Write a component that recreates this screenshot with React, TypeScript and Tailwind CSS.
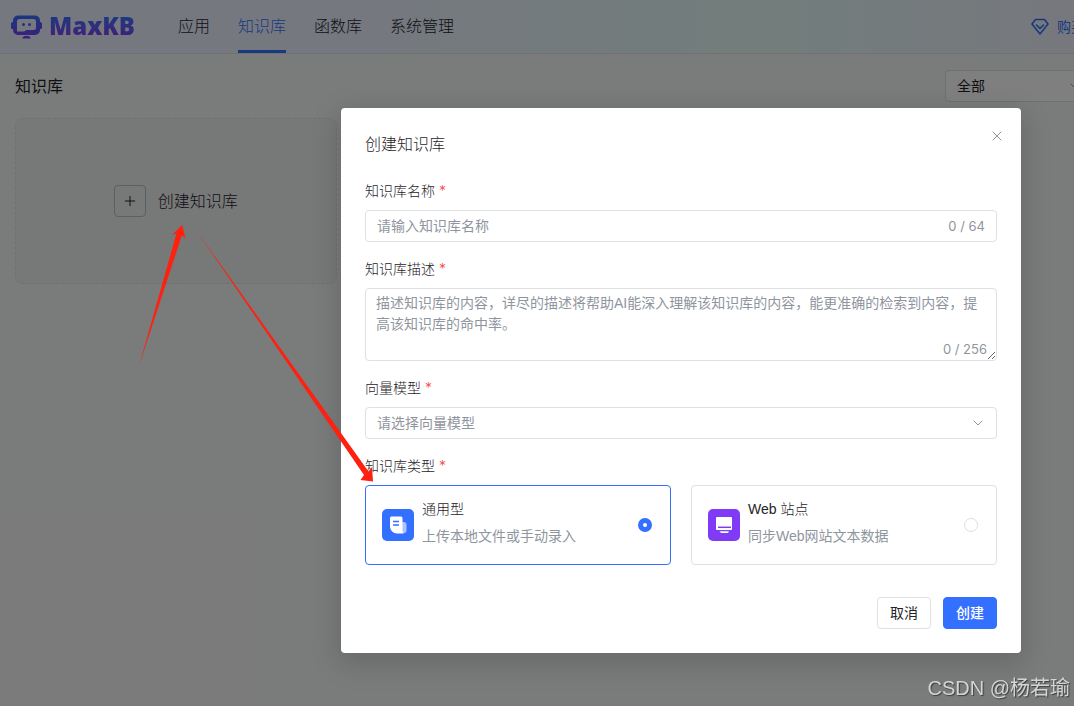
import { useState } from 'react';
import type { ReactNode } from 'react';
import { ChevronDown, Plus, X } from 'lucide-react';
import clsx from 'clsx';

const NAV = ['应用', '知识库', '函数库', '系统管理'];

const NAME_MAX = 64;
const DESC_MAX = 256;

function Logo() {
  return (
    <a href="#" className="flex w-[122px] items-center gap-[7px]">
      <svg width="31" height="24" viewBox="0 0 31 24" fill="none" className="shrink-0">
        <defs>
          <linearGradient id="logo" x1="0" y1="0" x2="0" y2="24" gradientUnits="userSpaceOnUse">
            <stop stopColor="#3370ff" />
            <stop offset="1" stopColor="#7f3bf5" />
          </linearGradient>
        </defs>
        <rect x="0" y="7" width="4" height="7" rx="1.5" fill="url(#logo)" />
        <rect x="27" y="7" width="4" height="7" rx="1.5" fill="url(#logo)" />
        <path
          fillRule="evenodd"
          fill="url(#logo)"
          d="M7 0.500h17a5 5 0 0 1 5 5v9.500a5 5 0 0 1-5 5H7a5 5 0 0 1-5-5V5.500a5 5 0 0 1 5-5zM8.500 4A2.500 2.500 0 0 0 6 6.500V16.500H13L15.500 15h7a2.500 2.500 0 0 0 2.500-2.500v-6A2.500 2.500 0 0 0 22.500 4z"
        />
        <circle cx="12.500" cy="9.500" r="1.500" fill="url(#logo)" />
        <circle cx="18.500" cy="9.500" r="1.500" fill="url(#logo)" />
        <path d="M13 21h5l2 2.500h-9z" fill="url(#logo)" />
      </svg>
      <span className="bg-linear-to-b from-[#3370ff] from-20% to-[#7f3bf5] to-80% bg-clip-text pb-0.5 font-['Open_Sans',sans-serif] text-2xl leading-8 font-extrabold text-transparent">
        MaxKB
      </span>
    </a>
  );
}

function Header() {
  return (
    <header className="flex h-[54px] items-stretch border-b border-[#dee0e3] bg-[linear-gradient(90deg,#ebf1ff_24%,#e5fbf8_56%,#f2ebfe_90%)] pr-[277px] pl-[11px]">
      <Logo />
      <nav className="ml-[45px] flex gap-7">
        {NAV.map((item) => (
          <a
            key={item}
            href="#"
            className={clsx(
              'flex items-center border-b-3 border-t-3 border-t-transparent text-base',
              item === '知识库' ? 'border-b-[#3370ff] text-[#3370ff]' : 'border-b-transparent',
            )}
          >
            {item}
          </a>
        ))}
      </nav>
      <button type="button" className="ml-auto flex items-center gap-2 text-sm font-normal text-[#3370ff]">
        <svg width="18" height="18" viewBox="0 0 18 18" fill="none" stroke="currentColor" strokeWidth="1.600" strokeLinejoin="round" strokeLinecap="round">
          <path d="M4.500 1.500h9l3.500 4.500L9 16 1 6z" />
          <path d="M5.500 7 9 10.500 12.500 7" />
        </svg>
        购买
      </button>
    </header>
  );
}

function Required() {
  return <span className="font-['Inter',sans-serif] text-[#f54a45]">*</span>;
}

function Field({ id, label, children }: { id: string; label: string; children: ReactNode }) {
  return (
    <div className="flex flex-col gap-2">
      <label htmlFor={id} className="text-sm leading-[22px]">
        {label} <Required />
      </label>
      {children}
    </div>
  );
}

type TypeCardProps = {
  title: string;
  desc: string;
  icon: ReactNode;
  checked: boolean;
  onSelect: () => void;
};

function TypeCard({ title, desc, icon, checked, onSelect }: TypeCardProps) {
  return (
    <label
      className={clsx(
        'flex h-20 flex-1 cursor-pointer items-center gap-2 rounded border pr-[18px] pl-4',
        checked ? 'border-[#3370ff]' : 'border-[#dee0e3]',
      )}
    >
      {icon}
      <span className="flex flex-1 flex-col gap-1 self-start pt-3 text-sm">
        <span className="leading-[22px]">{title}</span>
        <span className="leading-6 font-normal text-[#8f959e]">{desc}</span>
      </span>
      <input
        type="radio"
        name="type"
        checked={checked}
        onChange={onSelect}
        className="size-[14px] appearance-none rounded-full border border-[#dcdfe6] bg-white checked:border-5 checked:border-[#3370ff]"
      />
    </label>
  );
}

function DocIcon() {
  return (
    <svg width="32" height="32" viewBox="0 0 32 32">
      <rect width="32" height="32" rx="5" fill="#3370ff" />
      <path d="M19 13h3a2.500 2.500 0 0 1 2.500 2.500v6A2.500 2.500 0 0 1 22 24h-4z" fill="#a9c4ff" />
      <path d="M8 9a1.500 1.500 0 0 1 1.500-1.500H19a1.500 1.500 0 0 1 1.500 1.500v12.500A3 3 0 0 0 22 24.500h-7a7 7 0 0 1-7-7z" fill="#fff" />
      <path d="M11 12.500h6M11 16h6" stroke="#3370ff" strokeWidth="1.300" />
    </svg>
  );
}

function WebIcon() {
  return (
    <svg width="32" height="32" viewBox="0 0 32 32">
      <rect width="32" height="32" rx="5" fill="#7f3bf5" />
      <path d="M9 8h14a1 1 0 0 1 1 1v11a1 1 0 0 1-1 1H9a1 1 0 0 1-1-1V9a1 1 0 0 1 1-1z" fill="#fff" />
      <path d="M10 18.300h13" stroke="#7f3bf5" strokeWidth="1.500" />
      <path d="M11.500 22.300h9.500l-1 1.700h-7z" fill="#fff" />
    </svg>
  );
}

function CreateDialog() {
  const [name, setName] = useState('');
  const [desc, setDesc] = useState('');
  const [type, setType] = useState<'base' | 'web'>('base');

  return (
    <form
      role="dialog"
      aria-labelledby="dialog-title"
      className="relative w-[680px] rounded bg-white p-6 shadow-[0_8px_28px_4px_rgba(0,0,0,0.14)]"
    >
      <button type="button" aria-label="关闭" className="absolute top-5 right-4 text-[#8f959e]">
        <X size={16} strokeWidth={1.5} />
      </button>
      <h2 id="dialog-title" className="mb-[22px] text-base leading-[26px]">创建知识库</h2>

      <div className="flex flex-col gap-4">
        <Field id="name" label="知识库名称">
          <div className="flex h-8 items-center rounded border border-[#dee0e3] px-[11px] font-normal">
            <input
              id="name"
              value={name}
              maxLength={NAME_MAX}
              onChange={(e) => setName(e.target.value)}
              placeholder="请输入知识库名称"
              className="flex-1 text-sm outline-none placeholder:text-[#8f959e]"
            />
            <span className="font-['Inter',sans-serif] text-[13px] leading-4 text-[#8f959e]">{name.length} / {NAME_MAX}</span>
          </div>
        </Field>

        <Field id="desc" label="知识库描述">
          <div className="relative flex font-normal">
            <textarea
              id="desc"
              value={desc}
              maxLength={DESC_MAX}
              onChange={(e) => setDesc(e.target.value)}
              placeholder="描述知识库的内容，详尽的描述将帮助AI能深入理解该知识库的内容，能更准确的检索到内容，提高该知识库的命中率。"
              className="h-[73px] w-full resize-y rounded border border-[#dee0e3] px-[10px] py-1 text-sm leading-[21px] outline-none placeholder:text-[#8f959e]"
            />
            <span className="absolute right-[10px] bottom-1 font-['Inter',sans-serif] text-[13px] leading-4 text-[#8f959e]">
              {desc.length} / {DESC_MAX}
            </span>
          </div>
        </Field>

        <Field id="model" label="向量模型">
          <div className="relative flex">
            <select
              id="model"
              className="h-8 w-full appearance-none rounded border border-[#dee0e3] bg-white px-[11px] text-sm font-normal text-[#8f959e]"
            >
              <option>请选择向量模型</option>
            </select>
            <ChevronDown size={16} strokeWidth={1.5} className="pointer-events-none absolute top-2 right-[11px] text-[#8f959e]" />
          </div>
        </Field>

        <fieldset>
          <legend className="mb-2 text-sm leading-[22px]">
            知识库类型 <Required />
          </legend>
          <div className="flex gap-5">
            <TypeCard
              title="通用型"
              desc="上传本地文件或手动录入"
              icon={<DocIcon />}
              checked={type === 'base'}
              onSelect={() => setType('base')}
            />
            <TypeCard
              title="Web 站点"
              desc="同步Web网站文本数据"
              icon={<WebIcon />}
              checked={type === 'web'}
              onSelect={() => setType('web')}
            />
          </div>
        </fieldset>
      </div>

      <div className="mt-8 flex justify-end gap-3 text-sm">
        <button type="button" className="h-8 rounded border border-[#dee0e3] px-3 font-normal">取消</button>
        <button type="button" className="h-8 rounded border border-[#3370ff] bg-[#3370ff] px-3 font-medium text-white">
          创建
        </button>
      </div>
    </form>
  );
}

// Hand-drawn pointers: card -> dialog type
function Arrows() {
  return (
    <svg className="pointer-events-none absolute inset-0 h-full w-full" fill="#ff2010">
      <path d="M139 366 176.500 233.500 172 235 182 225 185.500 238 181.800 235.500z" />
      <path d="M196 230 364 475 360.500 480 373 481.500 372 467 368.500 471.500z" />
    </svg>
  );
}

export default function App() {
  return (
    <div className="overflow-x-hidden font-['Liberation_Sans','Noto_Sans_CJK_SC',sans-serif] font-light text-[#1f2329]">
      <div className="relative min-h-screen min-w-[1362px] bg-[#f5f6f7]">
        <Header />
        <main className="flex flex-col gap-4 px-[15px] py-4">
          <div className="flex items-center justify-between pr-[253px]">
            <h1 className="pt-0.5 text-base leading-[26px] font-normal">知识库</h1>
            <div className="relative flex">
              <select
                aria-label="筛选"
                className="h-8 w-[149px] appearance-none rounded border border-[#dee0e3] bg-white px-[11px] text-sm font-normal"
              >
                <option>全部</option>
              </select>
              <ChevronDown size={16} strokeWidth={1.5} className="pointer-events-none absolute top-2 right-[11px] text-[#8f959e]" />
            </div>
          </div>
          <div className="grid grid-cols-4 gap-[15px]">
            <button
              type="button"
              className="flex h-[166px] items-center justify-center gap-3 rounded-lg border border-dashed border-[#dee0e3] bg-[#eff0f1] text-base"
            >
              <span className="flex size-8 items-center justify-center rounded border border-[#bbbfc4]">
                <Plus size={16} strokeWidth={1.5} />
              </span>
              <span className="pt-0.5">创建知识库</span>
            </button>
          </div>
        </main>

        <div className="absolute inset-0 flex items-start justify-center bg-black/50 pt-[108px]">
          <CreateDialog />
        </div>
        <Arrows />
      </div>
      <div className="fixed right-1 bottom-1 font-['Liberation_Sans','Noto_Sans_CJK_SC',sans-serif] text-xl font-normal text-[#d4d4d4] [text-shadow:1px_1px_1px_rgba(0,0,0,0.5)]">
        CSDN @杨若瑜
      </div>
    </div>
  );
}
